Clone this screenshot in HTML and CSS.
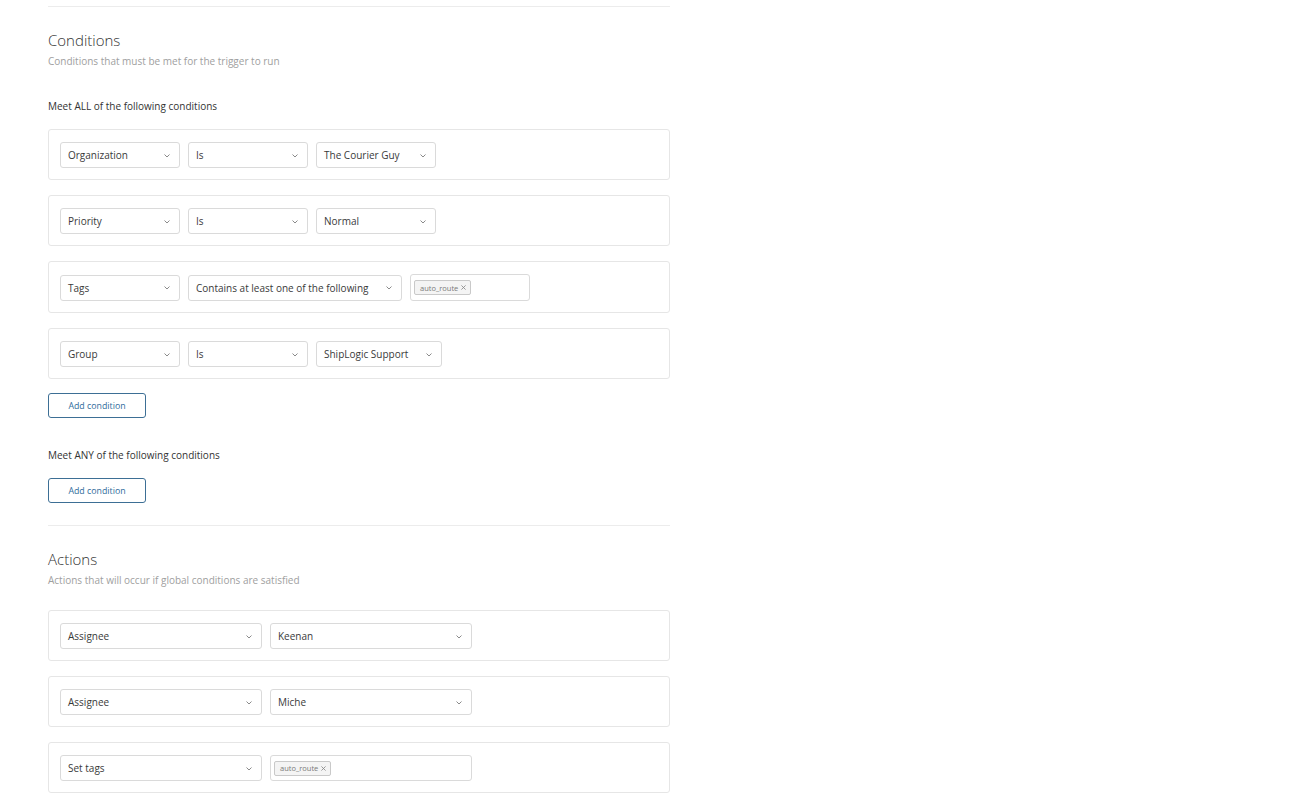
FILE: index.html
```html
<!DOCTYPE html>
<html>
<head>
<meta charset="utf-8">
<link rel="stylesheet" href="styles.css">
</head>
<body>
<div class="page">
  <div class="sep sep-top"></div>
  <section class="block">
    <h2 class="title">Conditions</h2>
    <p class="sub">Conditions that must be met for the trigger to run</p>
    <h3 class="group-label">Meet ALL of the following conditions</h3>
    <div class="card">
      <div class="select w120"><span>Organization</span><svg class="chev" viewBox="0 0 6 4"><polyline points="0.5,0.5 3,3 5.5,0.5"/></svg></div>
      <div class="select w120"><span>Is</span><svg class="chev" viewBox="0 0 6 4"><polyline points="0.5,0.5 3,3 5.5,0.5"/></svg></div>
      <div class="select w120"><span>The Courier Guy</span><svg class="chev" viewBox="0 0 6 4"><polyline points="0.5,0.5 3,3 5.5,0.5"/></svg></div>
    </div>
    <div class="card">
      <div class="select w120"><span>Priority</span><svg class="chev" viewBox="0 0 6 4"><polyline points="0.5,0.5 3,3 5.5,0.5"/></svg></div>
      <div class="select w120"><span>Is</span><svg class="chev" viewBox="0 0 6 4"><polyline points="0.5,0.5 3,3 5.5,0.5"/></svg></div>
      <div class="select w120"><span>Normal</span><svg class="chev" viewBox="0 0 6 4"><polyline points="0.5,0.5 3,3 5.5,0.5"/></svg></div>
    </div>
    <div class="card">
      <div class="select w120"><span>Tags</span><svg class="chev" viewBox="0 0 6 4"><polyline points="0.5,0.5 3,3 5.5,0.5"/></svg></div>
      <div class="select w214"><span>Contains at least one of the following</span><svg class="chev" viewBox="0 0 6 4"><polyline points="0.5,0.5 3,3 5.5,0.5"/></svg></div>
      <div class="tagbox tall w120"><span class="chip">auto_route <svg class="x" viewBox="0 0 6 6"><path d="M0.5 0.5L5.5 5.5M5.5 0.5L0.5 5.5"/></svg></span></div>
    </div>
    <div class="card">
      <div class="select w120"><span>Group</span><svg class="chev" viewBox="0 0 6 4"><polyline points="0.5,0.5 3,3 5.5,0.5"/></svg></div>
      <div class="select w120"><span>Is</span><svg class="chev" viewBox="0 0 6 4"><polyline points="0.5,0.5 3,3 5.5,0.5"/></svg></div>
      <div class="select w126"><span>ShipLogic Support</span><svg class="chev" viewBox="0 0 6 4"><polyline points="0.5,0.5 3,3 5.5,0.5"/></svg></div>
    </div>
    <button class="btn btn-all">Add condition</button>
    <h3 class="group-label any">Meet ANY of the following conditions</h3>
    <button class="btn btn-any">Add condition</button>
  </section>
  <div class="sep sep-mid"></div>
  <section class="block">
    <h2 class="title">Actions</h2>
    <p class="sub">Actions that will occur if global conditions are satisfied</p>
    <div class="card first-action">
      <div class="select w202"><span>Assignee</span><svg class="chev" viewBox="0 0 6 4"><polyline points="0.5,0.5 3,3 5.5,0.5"/></svg></div>
      <div class="select w202"><span>Keenan</span><svg class="chev" viewBox="0 0 6 4"><polyline points="0.5,0.5 3,3 5.5,0.5"/></svg></div>
    </div>
    <div class="card">
      <div class="select w202"><span>Assignee</span><svg class="chev" viewBox="0 0 6 4"><polyline points="0.5,0.5 3,3 5.5,0.5"/></svg></div>
      <div class="select w202"><span>Miche</span><svg class="chev" viewBox="0 0 6 4"><polyline points="0.5,0.5 3,3 5.5,0.5"/></svg></div>
    </div>
    <div class="card">
      <div class="select w202"><span>Set tags</span><svg class="chev" viewBox="0 0 6 4"><polyline points="0.5,0.5 3,3 5.5,0.5"/></svg></div>
      <div class="tagbox w202"><span class="chip">auto_route <svg class="x" viewBox="0 0 6 6"><path d="M0.5 0.5L5.5 5.5M5.5 0.5L0.5 5.5"/></svg></span></div>
    </div>
  </section>
</div>
</body>
</html>
```

FILE: styles.css
```css
* { box-sizing: border-box; }
html, body { margin: 0; padding: 0; background: #fff; }
body {
  font-family: "Open Sans", "Noto Sans", Arial, sans-serif;
  color: #333;
  font-size: 10px;
}
.page {
  width: 622px;
  margin-left: 48px;
  padding-top: 6px;
}
.sep { height: 1px; background: #ececec; }
.title {
  margin: 23px 0 0 0;
  font-size: 15px;
  line-height: 20px;
  font-weight: 300;
  color: #333;
}
.sub {
  margin: 4px 0 0 0;
  font-size: 10px;
  line-height: 15px;
  color: #a0a0a0;
}
.group-label {
  margin: 30px 0 0 0;
  font-size: 10px;
  line-height: 15px;
  font-weight: 400;
  color: #333;
}
.card {
  margin-top: 15px;
  border: 1px solid #e6e6e6;
  border-radius: 3px;
  padding: 12px 11px 11px 11px;
  display: flex;
  gap: 8px;
  align-items: center;
}
.first-action { margin-top: 22px; }
.select, .tagbox {
  height: 26px;
  border: 1px solid #dadada;
  border-radius: 3px;
  display: flex;
  align-items: center;
  padding: 0 0 0 7px;
  font-size: 10px;
  color: #3a3a3a;
  white-space: nowrap;
}
.select span { flex: 1; }
.chev {
  width: 6px;
  height: 4px;
  margin: 1px 9px 0 6px;
  fill: none;
  stroke: #8a8a8a;
  stroke-width: 1;
}
.w120 { width: 120px; }
.w126 { width: 126px; }
.w214 { width: 214px; }
.w202 { width: 202px; }
.tagbox { padding-left: 3px; }
.tagbox.tall { height: 27px; }
.chip {
  display: inline-flex;
  align-items: center;
  height: 15px;
  padding: 0 4px 0 5px;
  border: 1px solid #c9c9c9;
  border-radius: 2px;
  background: #f4f4f4;
  font-size: 7.5px;
  color: #7a7a7a;
}
.chip .x {
  width: 5px;
  height: 5px;
  margin-left: 3px;
  fill: none;
  stroke: #888;
  stroke-width: 1;
}
.btn {
  display: block;
  margin-top: 15px;
  width: 98px;
  height: 25px;
  border: 1px solid #3d6f95;
  border-radius: 3px;
  background: #fff;
  color: #2f6c9c;
  font-family: inherit;
  font-size: 8.8px;
  padding: 0;
}
.btn-all { margin-top: 14px; }
.sep-mid { margin-top: 22px; }
```
